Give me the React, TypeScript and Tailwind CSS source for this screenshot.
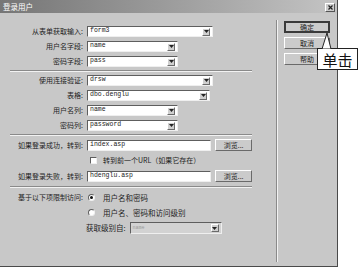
import React from "react";

const CJK = "[font-family:'Noto_Sans_CJK_SC','Noto_Sans_CJK_JP',sans-serif]";
const MONO = "[font-family:'Liberation_Mono',monospace]";

function Arrow() {
  return (
    <div className="mr-[2px] flex h-[8px] w-[8px] shrink-0 items-center justify-center border border-t-white border-l-white border-b-[#6a6a6a] border-r-[#6a6a6a] bg-[#cfcfcf]">
      <svg width="5" height="3" viewBox="0 0 5 3">
        <polygon points="0,0 5,0 2.5,3" fill="#222" />
      </svg>
    </div>
  );
}

function Field({ w, value, arrow }: { w: string; value: string; arrow?: boolean }) {
  return (
    <div
      className={`flex h-[11px] items-center justify-between border border-t-[#5e5e5e] border-l-[#5e5e5e] border-b-[#efefef] border-r-[#efefef] bg-white ${w}`}
    >
      <span className={`pl-[2px] text-[6.5px] leading-none text-[#222] ${MONO}`}>{value}</span>
      {arrow && <Arrow />}
    </div>
  );
}

function Label({ children }: { children: React.ReactNode }) {
  return (
    <div className={`w-[75px] shrink-0 pr-[2px] text-right text-[7px] leading-none text-[#1e1e1e] ${CJK}`}>
      {children}
    </div>
  );
}

function Row({ label, children, h = "h-[15px]" }: { label?: string; children: React.ReactNode; h?: string }) {
  return (
    <div className={`flex items-center gap-[2px] ${h}`}>
      <Label>{label}</Label>
      {children}
    </div>
  );
}

function Sep({ cls }: { cls: string }) {
  return (
    <div className={cls}>
      <div className="h-px bg-[#8a8a8a]" />
      <div className="h-px bg-[#f2f2f2]" />
    </div>
  );
}

function Btn({ children, def }: { children: React.ReactNode; def?: boolean }) {
  return (
    <div
      className={`flex h-[12px] w-[46px] items-center justify-center text-[7px] leading-none text-[#1e1e1e] ${CJK} ${
        def
          ? "border-2 border-[#3a3a3a] bg-[#cbcbcb]"
          : "border border-t-white border-l-white border-b-[#6a6a6a] border-r-[#6a6a6a] bg-[#cbcbcb]"
      }`}
    >
      {children}
    </div>
  );
}

function Browse() {
  return (
    <div
      className={`ml-[2px] flex h-[12px] w-[37px] items-center justify-center border border-t-white border-l-white border-b-[#6a6a6a] border-r-[#6a6a6a] bg-[#cbcbcb] text-[7px] leading-none text-[#1e1e1e] ${CJK}`}
    >
      浏览...
    </div>
  );
}

function Radio({ checked }: { checked?: boolean }) {
  return (
    <div className="flex h-[7px] w-[7px] items-center justify-center rounded-full border border-t-[#5e5e5e] border-l-[#5e5e5e] border-b-[#f0f0f0] border-r-[#f0f0f0] bg-white">
      {checked && <div className="h-[3px] w-[3px] rounded-full bg-[#111]" />}
    </div>
  );
}

export default function App() {
  return (
    <div className="relative h-[269px] w-[364px] overflow-hidden bg-white">
      <div className="flex h-[267px] w-[338px] flex-col border-r border-b border-[#4a4a4a] bg-[#c8c8c8]">
        {/* title bar */}
        <div className="relative flex h-[13px] shrink-0 items-center bg-gradient-to-r from-[#767676] to-[#c4c4c4] pl-[3px]">
          <span className={`text-[7.5px] leading-none text-white ${CJK}`}>登录用户</span>
          <div className="absolute right-[2px] top-[3px] flex h-[9px] w-[10px] items-center justify-center border border-t-white border-l-white border-b-[#555] border-r-[#555] bg-[#cbcbcb]">
            <svg width="5" height="5" viewBox="0 0 5 5">
              <path d="M0.5 0.5 L4.5 4.5 M4.5 0.5 L0.5 4.5" stroke="#222" strokeWidth="1.2" />
            </svg>
          </div>
        </div>

        {/* body */}
        <div className="flex flex-1">
          {/* form */}
          <div className="flex w-[252px] flex-col pl-[10px] pt-[11px]">
            <Row label="从表单获取输入:">
              <Field w="w-[126px]" value="form3" arrow />
            </Row>
            <Row label="用户名字段:">
              <Field w="w-[91px]" value="name" arrow />
            </Row>
            <Row label="密码字段:">
              <Field w="w-[91px]" value="pass" arrow />
            </Row>
            <Sep cls="py-[1px]" />
            <Row label="使用连接验证:">
              <Field w="w-[126px]" value="drsw" arrow />
            </Row>
            <Row label="表格:">
              <Field w="w-[123px]" value="dbo.denglu" arrow />
            </Row>
            <Row label="用户名列:">
              <Field w="w-[91px]" value="name" arrow />
            </Row>
            <Row label="密码列:">
              <Field w="w-[91px]" value="password" arrow />
            </Row>
            <Sep cls="py-[1px]" />
            <Row label="如果登录成功，转到:" h="h-[16px]">
              <Field w="w-[125px]" value="index.asp" />
              <Browse />
            </Row>
            <Row h="h-[15px]">
              <div className="ml-[3px] h-[7px] w-[7px] border border-t-[#5e5e5e] border-l-[#5e5e5e] border-b-[#f0f0f0] border-r-[#f0f0f0] bg-white" />
              <span className={`ml-[4px] text-[7px] leading-none text-[#1e1e1e] ${CJK}`}>
                转到前一个URL（如果它存在）
              </span>
            </Row>
            <Row label="如果登录失败，转到:" h="h-[16px]">
              <Field w="w-[125px]" value="hdenglu.asp" />
              <Browse />
            </Row>
            <Sep cls="pt-[2px] pb-[2px]" />
            <Row label="基于以下项限制访问:">
              <div className="ml-[1px]">
                <Radio checked />
              </div>
              <span className={`ml-[6px] text-[7.5px] leading-none text-[#1e1e1e] ${CJK}`}>用户名和密码</span>
            </Row>
            <Row>
              <div className="ml-[1px]">
                <Radio />
              </div>
              <span className={`ml-[6px] text-[7.5px] leading-none text-[#1e1e1e] ${CJK}`}>
                用户名、密码和访问级别
              </span>
            </Row>
            <div className="flex h-[16px] items-center pl-[76px]">
              <span className={`text-[7.5px] leading-none text-[#1e1e1e] ${CJK}`}>获取级别自:</span>
              <div className="ml-[4px] flex h-[12px] w-[92px] items-center justify-between border border-t-[#5e5e5e] border-l-[#5e5e5e] border-b-[#efefef] border-r-[#efefef] bg-[#d2d2d2]">
                <span className={`pl-[2px] text-[5px] leading-none text-[#9a9a9a] ${MONO}`}>name</span>
                <Arrow />
              </div>
            </div>
          </div>

          {/* vertical separator */}
          <div className="ml-[24px] mt-[7px] mb-[4px] flex">
            <div className="w-px bg-[#8a8a8a]" />
            <div className="w-px bg-[#f2f2f2]" />
          </div>

          {/* buttons */}
          <div className="flex flex-col gap-[4px] pl-[6px] pt-[8px]">
            <Btn def>确定</Btn>
            <Btn>取消</Btn>
            <Btn>帮助</Btn>
          </div>
        </div>
      </div>

      {/* callout */}
      <div
        className={`absolute left-[317px] top-[48px] flex h-[22px] w-[41px] items-center justify-center border border-[#222] bg-white text-[15px] leading-none text-[#111] ${CJK}`}
      >
        单击
      </div>
      <svg className="absolute left-0 top-0" width="364" height="269">
        <polygon points="322,48.5 327,33 331,48.5" fill="#fff" />
        <polyline points="322,49 327,33 331,49" fill="none" stroke="#222" strokeWidth="1" />
      </svg>
    </div>
  );
}
